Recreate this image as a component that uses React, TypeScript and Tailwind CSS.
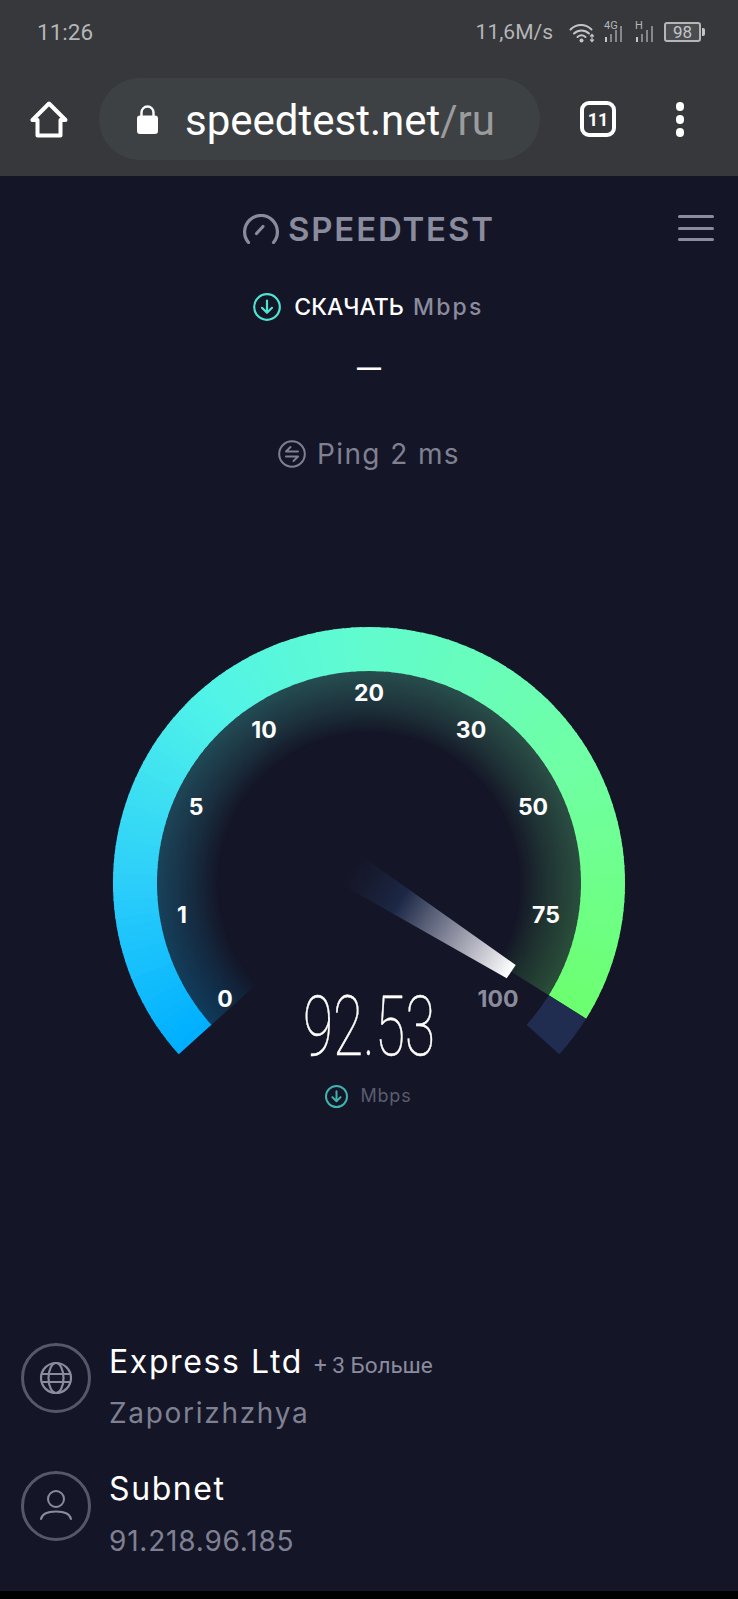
import React from "react";

const SANS = "font-['Inter','Noto_Sans',sans-serif]";
const ROBOTO = "font-['Roboto','Liberation_Sans',sans-serif]";

const stops: [number, number[]][] = [
  [0, [0, 176, 255]],
  [0.16, [44, 206, 250]],
  [0.35, [80, 243, 232]],
  [0.5, [96, 251, 208]],
  [0.75, [112, 255, 165]],
  [1, [108, 255, 110]],
];

function colorAt(t: number) {
  for (let i = 1; i < stops.length; i++) {
    if (t <= stops[i][0]) {
      const [a, ca] = stops[i - 1];
      const [b, cb] = stops[i];
      const k = (t - a) / (b - a);
      const c = ca.map((v, j) => Math.round(v + (cb[j] - v) * k));
      return `rgb(${c[0]},${c[1]},${c[2]})`;
    }
  }
  return "rgb(108,255,110)";
}

const START = 138;
const SWEEP = 264;
const VALUE_END = 254;

function pt(r: number, deg: number) {
  const a = (deg * Math.PI) / 180;
  return [r * Math.cos(a), r * Math.sin(a)];
}

function sector(r0: number, r1: number, a0: number, a1: number) {
  const [x0, y0] = pt(r1, a0);
  const [x1, y1] = pt(r1, a1);
  const [x2, y2] = pt(r0, a1);
  const [x3, y3] = pt(r0, a0);
  const large = a1 - a0 > 180 ? 1 : 0;
  return `M${x0} ${y0}A${r1} ${r1} 0 ${large} 1 ${x1} ${y1}L${x2} ${y2}A${r0} ${r0} 0 ${large} 0 ${x3} ${y3}Z`;
}

function segments(r0: number, r1: number) {
  const out: React.ReactNode[] = [];
  const step = 2;
  for (let d = 0; d < VALUE_END; d += step) {
    const end = Math.min(d + step + (d + step < VALUE_END ? 0.4 : 0), VALUE_END);
    out.push(
      <path key={d} d={sector(r0, r1, START + d, START + end)} fill={colorAt(d / VALUE_END)} />
    );
  }
  return out;
}

const labels: [string, number, number, string][] = [
  ["0", 225, 998, "#ffffff"],
  ["1", 182, 914, "#ffffff"],
  ["5", 196, 806, "#ffffff"],
  ["10", 264, 729, "#ffffff"],
  ["20", 369, 692, "#ffffff"],
  ["30", 471, 729, "#ffffff"],
  ["50", 533, 806, "#ffffff"],
  ["75", 546, 914, "#ffffff"],
  ["100", 498, 998, "#8b8c9b"],
];

function Gauge() {
  return (
    <svg viewBox="-270 -263 540 450" className="block mx-auto w-[540px] h-[450px]">
      <defs>
        <radialGradient id="glow" gradientUnits="userSpaceOnUse" cx="0" cy="0" r="213">
          <stop offset="0.7" stopColor="#000" />
          <stop offset="0.82" stopColor="#1e1e1e" />
          <stop offset="1" stopColor="#404040" />
        </radialGradient>
        <mask id="glowMask" maskUnits="userSpaceOnUse" x="-270" y="-263" width="540" height="450">
          <circle cx="0" cy="0" r="213" fill="url(#glow)" />
        </mask>
        <linearGradient id="needle" gradientUnits="userSpaceOnUse" x1="-24" y1="-15" x2="142" y2="88">
          <stop offset="0" stopColor="#1a2035" stopOpacity="0" />
          <stop offset="0.33" stopColor="#1c2846" />
          <stop offset="0.65" stopColor="#8b8d9f" />
          <stop offset="1" stopColor="#ffffff" />
        </linearGradient>
      </defs>
      <g mask="url(#glowMask)">{segments(140, 213)}</g>
      {segments(212, 256)}
      <path d={sector(212, 256, START + VALUE_END, START + SWEEP)} fill="#202d50" />
      <polygon points="146.7,82 137.7,95.3 -30,0 -6,-26" fill="url(#needle)" />
      {labels.map(([t, x, y, c]) => (
        <text
          key={t}
          x={x - 369}
          y={y - 883 + 8.5}
          textAnchor="middle"
          fill={c}
          fontFamily="Inter, 'Noto Sans', sans-serif"
          fontWeight={700}
          fontSize={23}
        >
          {t}
        </text>
      ))}
      <text
        transform="translate(0 172) scale(0.655 1)"
        textAnchor="middle"
        fill="#ffffff"
        stroke="#ffffff"
        strokeWidth={0.5}
        fontFamily="Roboto, 'Liberation Sans', sans-serif"
        fontWeight={100}
        fontSize={84}
      >
        92.53
      </text>
    </svg>
  );
}

function DownCircle({ size, color, sw }: { size: number; color: string; sw: number }) {
  return (
    <svg width={size} height={size} viewBox="0 0 28 28" fill="none" stroke={color} strokeWidth={sw} strokeLinecap="round" strokeLinejoin="round">
      <circle cx="14" cy="14" r="12.8" />
      <path d="M14 7.5v12M9 14.8l5 5 5-5" />
    </svg>
  );
}

function Bars({ label }: { label: string }) {
  return (
    <span className="relative block w-[22px] h-[24px]">
      <span className={`absolute left-0 top-0 text-[11px] leading-[11px] text-[#b5b6b8] ${ROBOTO}`}>{label}</span>
      <svg width="22" height="24" viewBox="0 0 22 24" fill="none" className="absolute left-0 top-0">
        <rect x="1" y="17" width="2" height="5" fill="#c4c5c7" />
        <rect x="6" y="14" width="2" height="8" fill="#85878a" />
        <rect x="11" y="10" width="2" height="12" fill="#85878a" />
        <rect x="16" y="6" width="2" height="16" fill="#85878a" />
      </svg>
    </span>
  );
}

export default function App() {
  return (
    <div className="w-full h-[1599px] flex flex-col bg-black overflow-hidden">
      <header className="h-[176px] shrink-0 bg-[#36383c]">
        <div className={`h-[64px] flex items-center pl-[37px] pr-[33px] text-[21px] text-[#b5b6b8] ${ROBOTO}`}>
          <span className="pt-[2px] text-[22.5px]">11:26</span>
          <span className="ml-auto pt-[2px]">11,6M/s</span>
          <svg width="26" height="21" viewBox="0 0 26 21" fill="none" className="ml-[16px]">
            <path d="M1.5 7.5C7.5 1.5 16.5 1.5 22.5 7.5M5 11.5c4.4-4 10.6-4 15 0M8.5 15c2.4-2 5.6-2 8 0" stroke="#c4c5c7" strokeWidth="2" strokeLinecap="round" />
            <circle cx="12.5" cy="18.5" r="2" fill="#c4c5c7" />
            <path d="M23 12.5v7M21.2 14.5l1.8-2 1.8 2M21.2 17.5l1.8 2 1.8-2" stroke="#c4c5c7" strokeWidth="1.2" />
          </svg>
          <span className="ml-[9px]"><Bars label="4G" /></span>
          <span className="ml-[9px]"><Bars label="H" /></span>
          <span className="ml-[7px] flex items-center">
            <span className="w-[37px] h-[20px] rounded-[3px] border-2 border-[#b5b6b8] bg-[#4a4c50] flex items-center justify-center text-[17px] leading-none text-[#c4c5c7]">98</span>
            <span className="ml-[1px] w-[3px] h-[8px] rounded-r-[2px] bg-[#c4c5c7]" />
          </span>
        </div>
        <div className="h-[112px] pb-[2px] flex items-center">
          <svg width="38" height="37" viewBox="0 0 38 37" fill="none" stroke="#fff" strokeWidth="4" strokeLinejoin="round" className="ml-[30px]">
            <path d="M19 2.5 2.5 19H7.5V34.5H30.5V19H35.5Z" />
          </svg>
          <div className="ml-[31px] w-[441px] h-[82px] rounded-[41px] bg-[#3e4144] flex items-center">
            <svg width="21" height="29" viewBox="0 0 21 29" className="ml-[38px]">
              <path d="M4.5 11V7.5a6 6 0 0 1 12 0V11" fill="none" stroke="#fff" strokeWidth="2.4" />
              <rect x="0" y="10.5" width="21" height="18.5" rx="3" fill="#fff" />
            </svg>
            <span className={`ml-[27px] pt-[4px] text-[42px] leading-none text-white whitespace-nowrap ${ROBOTO}`}>
              speedtest.net<span className="text-[#9a9c9e]">/ru</span>
            </span>
          </div>
          <div className={`ml-[40px] w-[36px] h-[36px] rounded-[9px] border-[4px] border-white flex items-center justify-center text-[18px] font-bold text-white ${ROBOTO}`}>
            11
          </div>
          <div className="ml-[60px] flex flex-col gap-[4px]">
            <span className="w-[8px] h-[9px] rounded-full bg-white" />
            <span className="w-[8px] h-[9px] rounded-full bg-white" />
            <span className="w-[8px] h-[9px] rounded-full bg-white" />
          </div>
        </div>
      </header>

      <main className={`h-[1415px] shrink-0 bg-[#141526] ${SANS}`}>
        <div className="pt-[38px] pl-[243px] pr-[24px] flex items-start h-[76px]">
          <svg width="36" height="30" viewBox="0 0 36 30" fill="none" stroke="#8a8c9e" strokeWidth="3.2" strokeLinecap="round">
            <path d="M5.5 28.5A16.4 16.4 0 1 1 30.5 28.5" />
            <path d="M13.5 19.5 20 12.5" />
          </svg>
          <span className="ml-[9px] text-[33px] leading-[30px] font-semibold text-[#8a8c9e] tracking-[1.8px] whitespace-nowrap">
            SPEEDTEST
          </span>
          <span className="ml-auto mt-[1px] w-[36px] flex flex-col gap-[8.5px]">
            <span className="h-[3px] rounded-full bg-[#8a8c9e]" />
            <span className="h-[3px] rounded-full bg-[#8a8c9e]" />
            <span className="h-[3px] rounded-full bg-[#8a8c9e]" />
          </span>
        </div>

        <div className="mt-[41px] h-[28px] flex items-center justify-center gap-[13px] pr-[1px]">
          <DownCircle size={28} color="#4fe3d3" sw={2.2} />
          <span className="text-[23px] leading-none font-medium whitespace-nowrap text-white">
            СКАЧАТЬ <span className="ml-[3px] text-[#8a8c9e] tracking-[2.2px]">Mbps</span>
          </span>
        </div>

        <div className="mt-[35px] h-[24px] flex items-center justify-center text-[24px] leading-none font-semibold text-white">—</div>

        <div className="mt-[60px] h-[28px] flex items-center justify-center gap-[11px] text-[28px] leading-none text-[#7f8193] tracking-[1.4px]">
          <svg width="28" height="28" viewBox="0 0 28 28" fill="none" stroke="#7f8193" strokeWidth="2" strokeLinecap="round" strokeLinejoin="round">
            <circle cx="14" cy="14" r="12.8" />
            <path d="M20 11.5H8l4.5-4.5M8 16.5h12L15.5 21" />
          </svg>
          <span className="whitespace-nowrap">Ping 2 ms</span>
        </div>

        <div className="mt-[152px]">
          <Gauge />
        </div>

        <div className="mt-[15px] h-[22px] flex items-center justify-center gap-[12px] pr-[1px]">
          <DownCircle size={23} color="#3fb3ad" sw={2.4} />
          <span className="text-[18px] leading-none text-[#5b5d6f] tracking-[0.8px]">Mbps</span>
        </div>

        <div className="mt-[236px] pl-[21px] flex">
          <div className="w-[70px] h-[70px] rounded-full border-[3px] border-[#56576a] flex items-center justify-center shrink-0">
            <svg width="34" height="34" viewBox="0 0 34 34" fill="none" stroke="#8a8c9e" strokeWidth="2.2">
              <circle cx="17" cy="17" r="15" />
              <ellipse cx="17" cy="17" rx="7.5" ry="15" />
              <path d="M2.5 13h29M2.5 21h29" />
            </svg>
          </div>
          <div className="ml-[18px]">
            <div className="flex items-baseline whitespace-nowrap">
              <span className="text-[32px] leading-[38px] text-white tracking-[1.6px]">Express Ltd</span>
              <span className={`ml-[11px] text-[22.5px] text-[#8a8c9e] ${ROBOTO}`}>+ 3 Больше</span>
            </div>
            <div className="mt-[13px] text-[28px] leading-[34px] text-[#7f8193] tracking-[1.7px]">Zaporizhzhya</div>
          </div>
        </div>

        <div className="mt-[41px] pl-[21px] flex">
          <div className="w-[70px] h-[70px] rounded-full border-[3px] border-[#56576a] flex items-center justify-center shrink-0">
            <svg width="34" height="34" viewBox="0 0 34 34" fill="none" stroke="#8a8c9e" strokeWidth="2" strokeLinecap="round">
              <circle cx="17" cy="10" r="8" />
              <path d="M2 30c1-5 6-7.5 15-7.5S31 25 32 30" />
            </svg>
          </div>
          <div className="ml-[18px] -mt-[1px]">
            <div className="text-[32px] leading-[38px] text-white tracking-[1.6px]">Subnet</div>
            <div className="mt-[16px] text-[28px] leading-[34px] text-[#7f8193] tracking-[0.8px] whitespace-nowrap">91.218.96.185</div>
          </div>
        </div>
      </main>
    </div>
  );
}
